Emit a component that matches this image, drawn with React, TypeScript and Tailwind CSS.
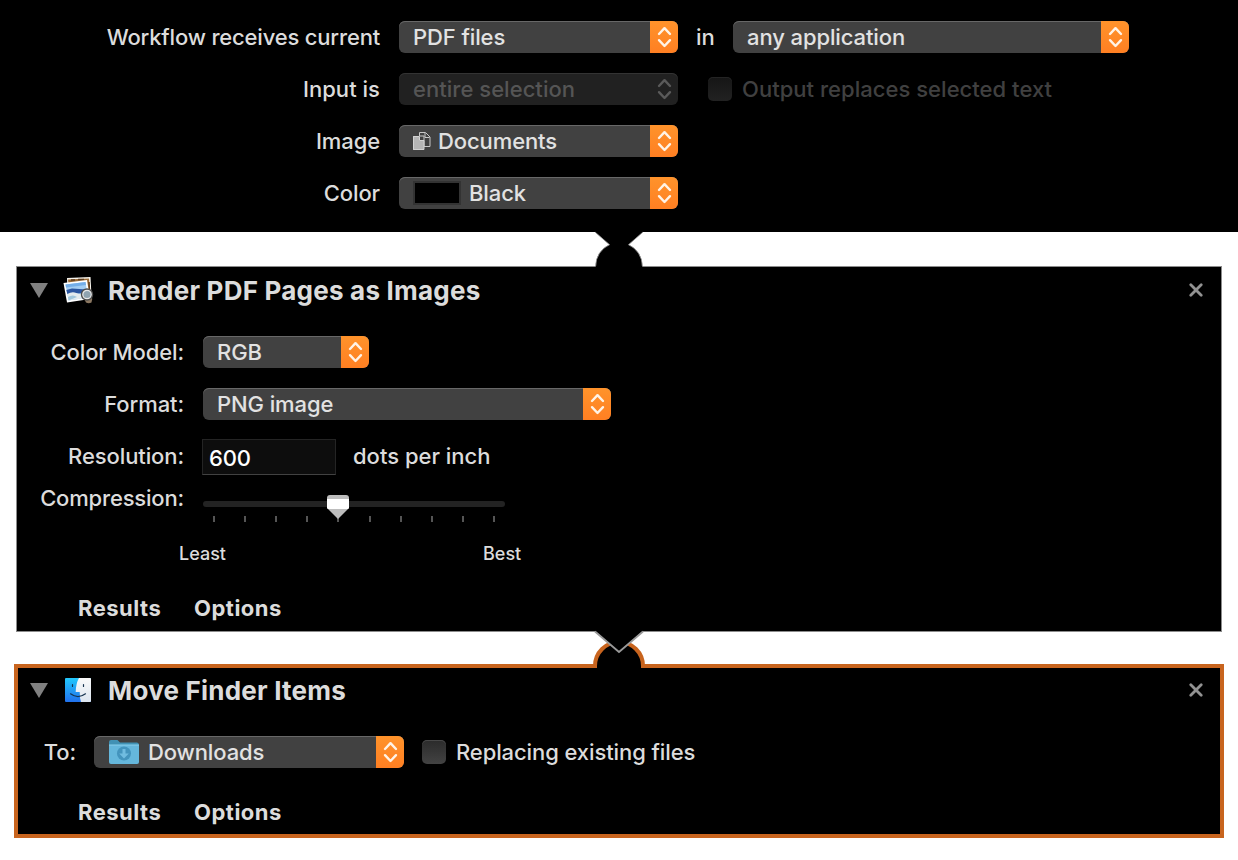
import type { ReactNode } from "react";

function Chevrons({ color }: { color: string }) {
  return (
    <svg width="28" height="32" viewBox="0 0 28 32" fill="none" stroke={color} strokeWidth="2.4" strokeLinecap="round" strokeLinejoin="round">
      <path d="M9 13 14.500 7.200 20 13M9 19.200 14.500 25 20 19.200" />
    </svg>
  );
}

function Popup({ width, disabled, children }: { width: string; disabled?: boolean; children: ReactNode }) {
  return (
    <div
      className={`flex h-8 shrink-0 items-center overflow-hidden rounded-[6px] ${width} ${
        disabled
          ? "bg-[#212121] text-[#555555] shadow-[inset_0_1px_0_#333333]"
          : "bg-[#414141] text-[#e2e2e2] shadow-[inset_0_1px_0_#686868]"
      }`}
    >
      <div className="flex flex-1 items-center pl-[14px]">{children}</div>
      <div className={disabled ? "h-8 w-7" : "h-8 w-7 bg-linear-to-b from-[#ff932b] to-[#ff7f22]"}>
        <Chevrons color={disabled ? "#5a5a5a" : "#fff3e6"} />
      </div>
    </div>
  );
}

function Checkbox({ disabled }: { disabled?: boolean }) {
  return (
    <span
      className={`size-6 shrink-0 rounded-[5px] bg-linear-to-b ${
        disabled ? "from-[#161616] to-[#222222] shadow-[inset_0_1px_0_#242424]" : "from-[#2b2b2b] to-[#434343] shadow-[inset_0_1px_0_#484848]"
      }`}
    />
  );
}

function DocumentsIcon() {
  return (
    <svg className="mr-[7px]" width="18" height="20" viewBox="0 0 18 20">
      <path d="M6.500 1.500h6l4.500 4.500v9.500H11V5H6.500z" fill="#414141" stroke="#c8c8c8" />
      <path d="M12 2v4.500h4.500" fill="none" stroke="#c8c8c8" />
      <path d="M0 5h6v4.500h5V19H0z" fill="#b5b5b5" />
      <path d="M.5 5.500h6v4h4.500v9H.5z" fill="none" stroke="#d2d2d2" />
    </svg>
  );
}

function PreviewIcon() {
  return (
    <svg className="-ml-px" width="32" height="30" viewBox="0 0 32 30">
      <path d="M4 2 27.500 1 28.500 20 5 23z" fill="#f8f5ee" />
      <path d="M5 3.500 26 2.500 27 18 7 20z" fill="#9a6a35" />
      <path d="M8 4h4M15 3.500h6M26 6l.5 9" stroke="#5f3d1c" strokeWidth="1.500" />
      <path d="M.5 7 24 4 27 23 4 26.500z" fill="#ffffff" />
      <path d="M2.500 8.500 22.500 6 25 21.500 5.500 24.500z" fill="#a3cdf2" />
      <path d="M2.500 8.500 22.500 6l.5 3L3 11.500z" fill="#74aee8" />
      <path d="M3.300 14 9 12.500l14.500 1 .5 3.500-19.700 1z" fill="#2a55a0" />
      <path d="M4.300 18q5-3 9-1t10.500 0l1 4.500-19.300 3z" fill="#e3ebee" />
      <path d="M5 21q5-3 9 0l-8.500 3.500z" fill="#9fc6dc" />
      <path d="M21 22.500 28.500 20q1.500 3 0 6.500-3 1.500-5.500 0z" fill="#8c7862" />
      <circle cx="24" cy="18.500" r="5.300" fill="#8fa3b0" stroke="#4c4c4c" strokeWidth="1.800" />
      <circle cx="24" cy="18.500" r="4.200" fill="none" stroke="#e8e8e8" strokeWidth="1.200" />
    </svg>
  );
}

function FinderIcon() {
  return (
    <svg className="-mt-[2px] ml-px" width="26" height="24" viewBox="0 0 26 24">
      <defs>
        <linearGradient id="finderBlue" x1="0" y1="0" x2="0" y2="1">
          <stop offset="0" stopColor="#22c8fc" />
          <stop offset="1" stopColor="#2171ed" />
        </linearGradient>
        <linearGradient id="finderWhite" x1="0" y1="0" x2="0" y2="1">
          <stop offset="0" stopColor="#fafafa" />
          <stop offset="1" stopColor="#dce5f0" />
        </linearGradient>
      </defs>
      <rect width="26" height="24" rx="1" fill="url(#finderBlue)" />
      <path d="M14 0h11q1 0 1 1v22q0 1-1 1h-9q-1.300-4-1.300-10h-4Q11 5 14 0z" fill="url(#finderWhite)" />
      <path d="M7.500 6.500v2M18.500 6.500v2M5.500 15.800q7.500 5.500 15 0" fill="none" stroke="#17334f" strokeWidth="1.200" strokeLinecap="round" />
    </svg>
  );
}

function FolderIcon() {
  return (
    <svg className="mr-[8px] ml-px" width="31" height="26" viewBox="0 0 31 26">
      <path d="M0 3Q0 1 2 1H8.500l2.500 2.500H28Q30 3.500 30 6v4H0z" fill="#4191b4" />
      <path d="M0 6h30v17q0 2-2 2H2q-2 0-2-2z" fill="#65b7dc" />
      <path d="M0 6h30" stroke="#8bd0ed" />
      <circle cx="15" cy="14.500" r="7" fill="#4394bd" />
      <path d="M13.500 10h3v4.500h3.300L15 19.500l-4.800-5h3.300z" fill="#70bce0" />
    </svg>
  );
}

function CardHeader({ icon, title }: { icon: ReactNode; title: ReactNode }) {
  return (
    <div className="flex h-12 items-center">
      <svg className="-mt-[2px] ml-[13px]" width="18" height="15" viewBox="0 0 18 15">
        <path d="M0 0h18L9 15z" fill="#808080" />
      </svg>
      <div className="ml-[16px] flex w-8 justify-start">{icon}</div>
      <h2 className="ml-[12px] flex-1 text-[26px] font-bold tracking-[0.22px]">{title}</h2>
      <svg className="-mt-[2px] mr-[18px]" width="14" height="14" viewBox="0 0 14 14" stroke="#929292" strokeWidth="2.800" strokeLinecap="round">
        <path d="M1.800 1.800 12.200 12.200M12.200 1.800 1.800 12.200" />
      </svg>
    </div>
  );
}

function CardFooter() {
  return (
    <div className="flex h-8 items-center pl-[61px] font-bold tracking-[0.5px]">
      <span className="w-[116px]">Results</span>
      <span>Options</span>
    </div>
  );
}

const TICKS = [0, 1, 2, 3, 4, 5, 6, 7, 8, 9];

export default function App() {
  return (
    <main className="h-[860px] w-[1238px] overflow-hidden bg-white font-['Inter','Liberation_Sans',sans-serif] text-[22px] leading-8 font-[450] tracking-[-0.1px] whitespace-nowrap text-[#dcdcdc]">
      <section className="flex h-[232px] flex-col gap-5 bg-black pt-[21px]">
        <div className="flex h-8">
          <span className="mr-[19px] w-[380px] text-right tracking-[-0.18px]">Workflow receives current</span>
          <Popup width="w-[279px]"><span>PDF files</span></Popup>
          <span className="w-[55px] pl-[18px]">in</span>
          <Popup width="w-[396px]"><span>any application</span></Popup>
        </div>
        <div className="flex h-8 items-center tracking-[0.03px]">
          <span className="mr-[19px] w-[380px] text-right">Input is</span>
          <Popup width="w-[279px]" disabled><span>entire selection</span></Popup>
          <div className="ml-[30px] flex items-center gap-[10px] text-[#404040]">
            <Checkbox disabled />
            <span>Output replaces selected text</span>
          </div>
        </div>
        <div className="flex h-8">
          <span className="mr-[19px] w-[380px] text-right">Image</span>
          <Popup width="w-[279px]"><DocumentsIcon /><span>Documents</span></Popup>
        </div>
        <div className="flex h-8">
          <span className="mr-[19px] w-[380px] text-right">Color</span>
          <Popup width="w-[279px]">
            <span className="mr-[8px] h-6 w-12 border-2 border-[#333333] bg-black" />
            <span>Black</span>
          </Popup>
        </div>
      </section>

      <div className="flex h-[34px] justify-center">
        <svg className="relative overflow-visible" width="50" height="34" viewBox="0 0 50 34">
          <path d="M1.700 35V34A23.300 23.300 0 0 1 15.500 12.700L1 0H49L34.500 12.700A23.300 23.300 0 0 1 48.300 34v1z" fill="#000" />
          <path d="M1.700 34A23.300 23.300 0 0 1 15.500 12.700L1 0M49 0 34.500 12.700A23.300 23.300 0 0 1 48.300 34" fill="none" stroke="#999999" strokeWidth=".8" />
        </svg>
      </div>

      <section className="mx-4 h-[366px] border border-[#8c8c8c] bg-black">
        <CardHeader icon={<PreviewIcon />} title="Render PDF Pages as Images" />
        <div className="mt-[21px] flex h-8">
          <span className="mr-[19px] w-[167px] text-right">Color Model:</span>
          <Popup width="w-[166px]"><span>RGB</span></Popup>
        </div>
        <div className="mt-5 flex h-8">
          <span className="mr-[19px] w-[167px] text-right">Format:</span>
          <Popup width="w-[408px]"><span>PNG image</span></Popup>
        </div>
        <div className="mt-[19px] flex h-9 items-start">
          <span className="mt-px mr-[18px] w-[167px] text-right">Resolution:</span>
          <div className="h-9 w-[134px] border border-[#242424] border-b-[#424242] bg-[#0d0d0d] pt-[2px] pl-[6px] text-white">600</div>
          <span className="mt-px ml-[17px] tracking-normal">dots per inch</span>
        </div>
        <div className="mt-[7px] flex h-[42px]">
          <span className="mr-[19px] w-[167px] text-right tracking-[-0.18px]">Compression:</span>
          <svg width="302" height="42" viewBox="0 0 302 42">
            <rect y="19" width="302" height="6" rx="3" fill="#232323" />
            {TICKS.map((i) => (
              <rect key={i} x={10 + Math.round(i * 31.1)} y="34" width="2" height="6" fill="#555555" />
            ))}
            <path d="M124 16q0-3 3-3h16q3 0 3 3v10l-11 11-11-11z" fill="#bdbdbd" />
            <path d="M124 17h22v9l-1 1h-20l-1-1z" fill="#fff" />
          </svg>
        </div>
        <div className="mt-[14px] flex h-8 pl-[162px] text-[18px] tracking-normal">
          <span className="w-[304px]">Least</span>
          <span>Best</span>
        </div>
        <div className="mt-[22px]"><CardFooter /></div>
      </section>

      <div className="flex h-8 justify-center">
        <svg className="relative overflow-visible" width="50" height="32" viewBox="0 0 50 32">
          <path d="M1 36V34A24 24 0 0 1 49 34v2z" fill="#000" stroke="none" />
          <path d="M1 36V34A24 24 0 0 1 49 34v2" fill="none" stroke="#c8641e" strokeWidth="4" />
          <path d="M1-1 25 20 49-1z" fill="#000" />
          <path d="M1-.5 25 20 49-.5" fill="none" stroke="#999" strokeWidth="1.800" />
        </svg>
      </div>

      <section className="mx-[14px] h-[174px] border-4 border-[#c8641e] bg-black">
        <div className="-mx-px -mt-px"><CardHeader icon={<FinderIcon />} title="Move Finder Items" /></div>
        <div className="mt-[21px] flex h-8 items-center">
          <span className="mr-[18px] w-[58px] text-right">To:</span>
          <Popup width="w-[310px]"><FolderIcon /><span>Downloads</span></Popup>
          <div className="ml-[18px] flex items-center gap-[10px]">
            <Checkbox />
            <span>Replacing existing files</span>
          </div>
        </div>
        <div className="mt-7 -ml-px"><CardFooter /></div>
      </section>
    </main>
  );
}
